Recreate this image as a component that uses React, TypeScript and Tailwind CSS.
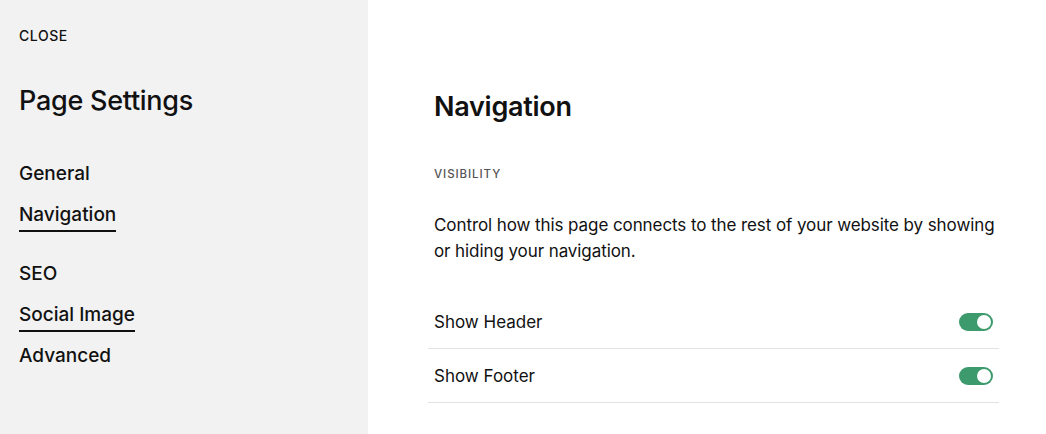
import React from "react";

const font = { fontFamily: "Inter, 'Noto Sans', sans-serif" };

function Toggle() {
  return (
    <div className="flex h-[18px] w-[34px] items-center justify-end rounded-full bg-[#3d9a6c] px-[2px]">
      <div className="h-[14px] w-[14px] rounded-full bg-white" />
    </div>
  );
}

export default function App() {
  return (
    <div className="flex h-[434px] w-[1046px] bg-white text-[#111]" style={font}>
      <aside className="flex w-[368px] shrink-0 flex-col bg-[#f2f2f2] px-[19px]">
        <div className="mt-[28px] text-[14px] font-medium leading-[16px] tracking-[0.04em]">CLOSE</div>
        <div className="mt-[41px] text-[27px] font-medium leading-[32px] tracking-[-0.01em]">Page Settings</div>
        <nav className="mt-[45px] flex flex-col items-start text-[19px] font-medium leading-[24px]">
          <div>General</div>
          <div className="mt-[17px] border-b-2 border-[#111] pb-[3px]">Navigation</div>
          <div className="mt-[30px]">SEO</div>
          <div className="mt-[17px] border-b-2 border-[#111] pb-[3px]">Social Image</div>
          <div className="mt-[12px]">Advanced</div>
        </nav>
      </aside>
      <main className="flex-1 pl-[60px] pr-[47px]">
        <h1 className="mt-[91px] pl-[6px] text-[27px] font-semibold leading-[32px] tracking-[-0.01em]">Navigation</h1>
        <div className="mt-[44px] pl-[6px] text-[11.5px] font-medium leading-[14px] tracking-[0.08em] text-[#555]">VISIBILITY</div>
        <p className="mt-[31px] pl-[6px] text-[17px] leading-[26px] tracking-[-0.005em]">
          Control how this page connects to the rest of your website by showing or hiding your navigation.
        </p>
        <div className="mt-[31px]">
          <div className="flex h-[54px] items-center justify-between border-b border-[#e3e3e3] pl-[6px] pr-[6px] pt-[1px]">
            <span className="text-[17px] leading-[20px]">Show Header</span>
            <Toggle />
          </div>
          <div className="flex h-[54px] items-center justify-between border-b border-[#e3e3e3] pl-[6px] pr-[6px] pt-[1px]">
            <span className="text-[17px] leading-[20px]">Show Footer</span>
            <Toggle />
          </div>
        </div>
      </main>
    </div>
  );
}
